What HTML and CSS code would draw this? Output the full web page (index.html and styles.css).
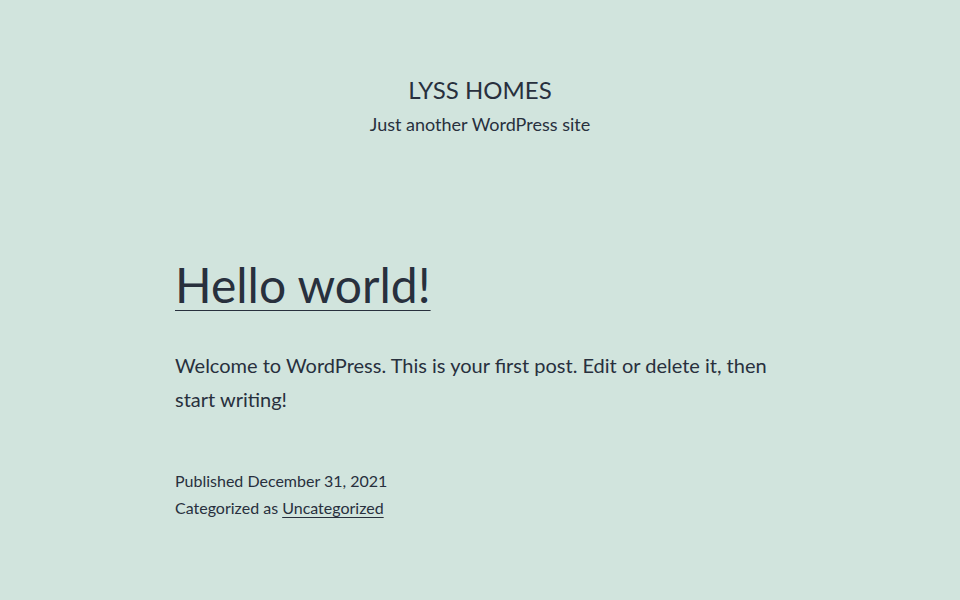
FILE: index.html
```html
<!DOCTYPE html>
<html lang="en">
<head>
<meta charset="utf-8">
<title>LYSS HOMES – Just another WordPress site</title>
<link rel="stylesheet" href="styles.css">
</head>
<body>
<div class="site">
  <header class="site-header">
    <p class="site-title"><a href="#">LYSS HOMES</a></p>
    <p class="site-description">Just another WordPress site</p>
  </header>
  <main class="site-main">
    <article class="post">
      <h2 class="entry-title"><a href="#">Hello world!</a></h2>
      <div class="entry-content">
        <p>Welcome to WordPress. This is your first post. Edit or delete it, then start writing!</p>
      </div>
      <footer class="entry-footer">
        <span class="posted-on">Published December 31, 2021</span>
        <span class="cat-links">Categorized as <a href="#">Uncategorized</a></span>
      </footer>
    </article>
  </main>
</div>
</body>
</html>
```
FILE: styles.css
```css
html, body {
  margin: 0;
  padding: 0;
}
body {
  background: #d1e4dd;
  color: #28303d;
  font-family: "Lato", "Liberation Sans", sans-serif;
}
a {
  color: #28303d;
}
.site {
  display: flex;
  flex-direction: column;
  align-items: center;
}
.site-header {
  padding-top: 75px;
  text-align: center;
}
.site-title {
  margin: 0;
  font-size: 24px;
  line-height: 30px;
  font-weight: 400;
}
.site-title a {
  text-decoration: none;
}
.site-description {
  margin: 6px 0 0;
  font-size: 18px;
  line-height: 26px;
}
.site-main {
  width: 610px;
  padding-top: 117px;
}
.entry-title {
  margin: 0;
  font-size: 48px;
  line-height: 62px;
  font-weight: 400;
}
.entry-title a {
  text-decoration: underline;
  text-decoration-thickness: 1px;
  text-underline-offset: 7px;
}
.entry-content p {
  margin: 32px 0 0;
  font-size: 20px;
  line-height: 34px;
}
.entry-footer {
  margin-top: 51px;
  display: flex;
  flex-direction: column;
  font-size: 16px;
  line-height: 27px;
}
.cat-links a {
  text-decoration-thickness: 1px;
  text-underline-offset: 3px;
}
```
